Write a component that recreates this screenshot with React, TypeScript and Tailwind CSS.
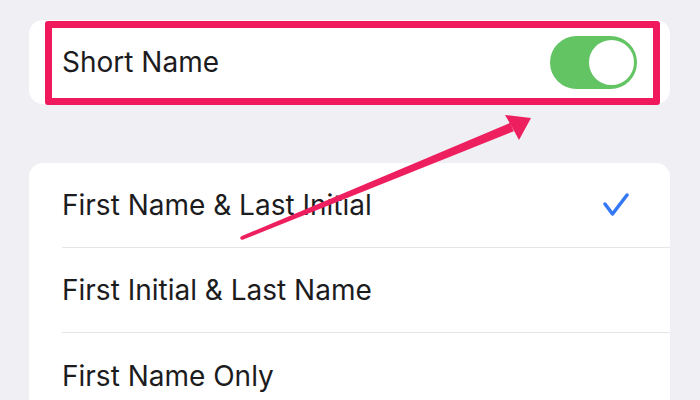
import React from "react";

const rows = [
  { label: "First Name & Last Initial", checked: true },
  { label: "First Initial & Last Name", checked: false },
  { label: "First Name Only", checked: false },
];

function Toggle() {
  return (
    <div className="relative h-[53px] w-[87px] rounded-full bg-[#62c462]">
      <div className="absolute right-[1px] top-[2px] h-[49px] w-[49px] rounded-full border-[2px] border-[#62c462] bg-white" />
    </div>
  );
}

function Check() {
  return (
    <svg width="26" height="24" viewBox="0 0 26 24" fill="none">
      <path
        d="M2 11 L9.5 21 L24 2"
        stroke="#3478f6"
        strokeWidth="3.5"
        strokeLinecap="round"
        strokeLinejoin="round"
      />
    </svg>
  );
}

function Arrow() {
  return (
    <svg
      className="pointer-events-none absolute inset-0"
      width="700"
      height="400"
      viewBox="0 0 700 400"
    >
      <polygon
        points="241.3,236.3 242.7,239.7 513.8,131.2 510.2,122.8"
        fill="#ee1f5f"
      />
      <circle cx="242" cy="238" r="1.8" fill="#ee1f5f" />
      <polygon points="531,118 505,115 512,127 519,140" fill="#ee1f5f" />
    </svg>
  );
}

export default function App() {
  return (
    <main className="relative h-[400px] w-[700px] overflow-hidden bg-[#efeff4] font-['Inter',sans-serif] text-[#1c1c1e]">
      <div className="flex flex-col gap-[59px] pl-[29px] pr-[30px] pt-[20px]">
        <section className="relative flex h-[84px] items-center justify-between rounded-[14px] bg-white px-[33px]">
          <span className="text-[28px] leading-none">Short Name</span>
          <Toggle />
          <div className="pointer-events-none absolute bottom-[-1px] left-[16px] right-[10px] top-[1px] rounded-[3px] border-[7px] border-[#f0195d]" />
        </section>

        <section className="rounded-[14px] bg-white">
          {rows.map((row, index) => (
            <div
              key={row.label}
              className={`ml-[33px] flex h-[85px] items-center justify-between pr-[41px] ${
                index < rows.length - 1 ? "border-b border-[#e4e4e9]" : ""
              }`}
            >
              <span className="text-[28px] leading-none">{row.label}</span>
              {row.checked ? <Check /> : null}
            </div>
          ))}
        </section>
      </div>
      <Arrow />
    </main>
  );
}
